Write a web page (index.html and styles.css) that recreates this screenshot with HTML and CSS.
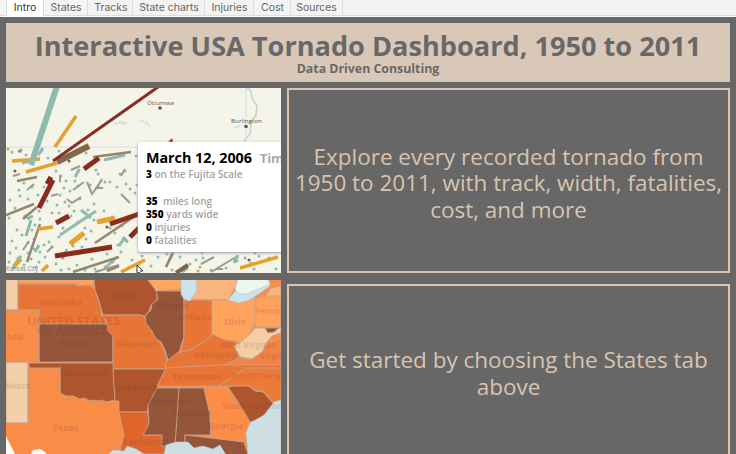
FILE: index.html
```html
<!DOCTYPE html>
<html lang="en">
<head>
<meta charset="utf-8">
<title>Interactive USA Tornado Dashboard</title>
<link rel="stylesheet" href="styles.css">
</head>
<body>
<nav class="tabs">
  <a class="tab active">Intro</a><a class="tab states">States</a><a class="tab tracks-tab">Tracks</a><a class="tab charts">State charts</a><a class="tab injuries">Injuries</a><a class="tab cost">Cost</a><a class="tab sources">Sources</a>
</nav>
<main class="dashboard">
  <header class="banner">
    <h1>Interactive USA Tornado Dashboard, 1950 to 2011</h1>
    <p>Data Driven Consulting</p>
  </header>
  <div class="grid">
    <section class="map">
      <svg viewBox="6 88 275 185" width="275" height="185">
        <rect x="6" y="88" width="275" height="185" fill="#f4f4e9"/>
        <path d="M6 147H139M246 88V142" stroke="#d2d7d4" fill="none" stroke-width=".8"/>
        <path d="M247 88l4 3 1 7 5 8-1 9-5 7-1 12-6 7" stroke="#c3d3d5" fill="none" stroke-width="1.6"/>
        <path d="M115 125l5-3 4 2 4-1M123 121v4M234 128l6-2" stroke="#dce1d9" fill="none" stroke-width="2"/>
        <path d="M139 122l4-1 5 4M146 121l4 6" stroke="#e6e5d0" fill="none" stroke-width="2"/>
        <g fill="none" class="dots">
          <path stroke="#8fbbae" d="M12 152h0M26 155h0M42 149h0M48 158h0M59 151h0M86 153h0M96 170h0M98 174h0M79 170h0M136 156h0M125 171h0M120 174h0M61 176h0M66 181h0M56 171h0M19 190h0M24 183h0M32 187h0M44 187h0M50 182h0M64 188h0M60 195h0M70 191h0M75 181h0M78 186h0M90 185h0M98 186h0M110 182h0M126 184h0M137 185h0M130 189h0M10 200h0M15 208h0M20 196h0M28 199h0M38 195h0M47 201h0M57 205h0M65 202h0M80 199h0M94 204h0M88 210h0M74 211h0M59 213h0M65 217h0M40 219h0M35 225h0M25 216h0M17 230h0M22 235h0M12 241h0M10 253h0M16 248h0M18 258h0M24 265h0M31 259h0M36 267h0M40 252h0M44 245h0M49 242h0M59 237h0M63 228h0M71 216h0M78 222h0M85 228h0M94 220h0M104 211h0M113 219h0M122 226h0M126 240h0M131 236h0M118 245h0M107 254h0M92 259h0M82 247h0M76 252h0M63 258h0M56 264h0M69 269h0M77 265h0M85 270h0M95 269h0M105 267h0M113 262h0M121 252h0M132 260h0M142 256h0M151 266h0M158 257h0M167 254h0M172 270h0M180 257h0M190 264h0M196 260h0M203 258h0M211 270h0M226 268h0M237 261h0M245 258h0M254 269h0M259 256h0M269 258h0M276 269h0"/>
          <path stroke="#8fbbae" d="M9 218h0M28 243h0M34 239h0M39 211h0M32 230h0M52 213h0M69 206h0M105 182h0M117 187h0M135 193h0M127 217h0M136 216h0M9 262h0M14 268h0M28 253h0M34 249h0M45 257h0M39 262h0M52 247h0M47 267h0M61 270h0M73 246h0M86 239h0M91 231h0M110 228h0M115 233h0M128 268h0M140 269h0M202 253h0M200 267h0M255 253h0M251 263h0"/>
          <path stroke="#8a5344" d="M69 161h0M107 227h0M249 260h0M15 171h0M20 151h0"/>
          <path stroke="#e4a12d" d="M198 271h0M8 149h0M139 264h0"/>
        </g>
        <g fill="none">
          <path stroke="#9b9c8e" stroke-width="2" d="M27 190l7-6M51 196l7-2M67 199l5 4 9-6M73 190l11-8M87 182l5 12 10-14M95 188h8M121 194l9 9M71 170l9-4M13 176l7-2M18 152l4-3M60 182v-7M99 184l3-5M121 176l4-7M23 250l6-9M47 252l6-6M62 259l5-10M95 272l24-7M211 272l25-15M201 264l13-7M217 269h6M166 267l7-13"/>
          <path stroke="#8fb9af" stroke-width="3" d="M22 163l10-3M38 155l5-6M75 177l4-7M104 160l21-5M26 236l5-16M27 219l6-3M35 252l4-7M13 267l8-11M105 268l12-11M119 246l6-9M122 238l6 4M182 272l6-4M234 263l4-8"/>
          <path stroke="#96866c" stroke-width="2.5" d="M6 215l28-11M23 219l14-12M27 262l13-38M93 157l38-5M166 267l7-15M95 243l43-29M73 272l46-15M17 181l20-4M107 271l12-5"/>
          <path stroke="#e4a12d" stroke-width="3.5" d="M55 147l21-31M12 161l28-2M26 172l31-9M38 229l15-2M15 266l6-7M42 271l6-6M121 272l24-12M240 268l38-11"/>
          <path stroke="#e4a12d" stroke-width="5" d="M70 244l14-11M97 222l18-4"/>
          <path stroke="#8a2c1b" stroke-width="5" d="M53 180l-14 28M55 256l57-9M84 169l15-11M110 224l29-10M56 223l13-7M130 237l9-9M47 184l4-7"/>
          <path stroke="#82684a" stroke-width="6" d="M57 162l32-16"/>
          <path stroke="#846142" stroke-width="4" d="M176 273l12-8"/>
          <path stroke="#8fbbae" stroke-width="6" d="M31 165L57 86"/>
          <path stroke="#93b9b1" stroke-width="3" d="M60 235L96 211M81 210l10 8"/>
          <path stroke="#8a2c20" stroke-width="3" d="M53 161L158 87"/>
          <path stroke="#a83832" stroke-width="4" d="M170 140l2 2"/>
        </g>
        <g class="place">
          <text x="147" y="105" textLength="27" lengthAdjust="spacingAndGlyphs">Ottumwa</text>
          <text x="231" y="123" textLength="31" lengthAdjust="spacingAndGlyphs">Burlington</text>
          <text x="6" y="271" textLength="32" lengthAdjust="spacingAndGlyphs" class="city">Kansas City</text>
        </g>
        <circle cx="160" cy="108" r="1.8" fill="#555"/><circle cx="246" cy="126.500" r="1.8" fill="#555"/>
      </svg>
      <div class="tooltip">
        <h2>March 12, 2006 <span>Time</span></h2>
        <p><b>3</b> on the Fujita Scale</p>
        <p class="gap"><b>35</b>&nbsp; miles long</p>
        <p><b>350</b> yards wide</p>
        <p><b>0</b> injuries</p>
        <p><b>0</b> fatalities</p>
      </div>
      <svg class="cursor" viewBox="0 0 8 10" width="8" height="10"><path d="M1 0V9L3 7L5 10M1 0L7 6H4" fill="#fff" stroke="#333"/></svg>
    </section>
    <section class="message"><p>Explore every recorded tornado from 1950 to 2011, with track, width, fatalities, cost, and more</p></section>
    <section class="map">
      <svg viewBox="6 280 275 185" width="275" height="185">
        <rect x="6" y="280" width="275" height="185" fill="#f98c46"/>
        <g stroke="#c4a18a" stroke-width=".9" stroke-linejoin="round">
          <path fill="#f3d0a9" d="M6 279H18V310H6ZM6 362H28V423H6Z"/>
          <path fill="#ffa160" d="M18 279H95L91 286 80 285 74 283H18Z"/>
          <path fill="#e87536" d="M18 284H74L79 286 84 285 91 286 95 290 100 305 102 316 108 324H39V310H18Z"/>
          <path fill="#af552d" d="M94 279H151L157 292 157 300 151 305 149 311 145 316 140 315H103L99 301 95 290Z"/>
          <path fill="#94553b" d="M39 324H107L109 330 113 336V362H39Z"/>
          <path fill="#e87536" d="M102 315H141L146 318 149 326 156 338 161 344 167 358 166 369H113V336L107 330 108 324Z"/>
          <path fill="#ffa65f" d="M147 279H181V289L156 291 151 284Z"/>
          <path fill="#fab57f" d="M188 279H240L228 300H184V290Z"/>
          <path fill="#94553b" d="M156 291H182L184 300V337L180 349 176 359 168 360 165 350 161 342 156 339 152 331 146 323 145 316 151 310 152 304 158 299Z"/>
          <path fill="#e87536" d="M184 300H212V334L207 341 200 344 190 350 181 352 184 337Z"/>
          <path fill="#ffa35c" d="M212 300H228L244 302 255 293V323L250 334 242 344 235 341 227 342 212 336Z"/>
          <path fill="#fab57f" d="M263 300L271 288 281 286V297L273 298V302"/>
          <path fill="#ffa35c" d="M255 299L264 296 281 296V327H255Z"/>
          <path fill="#e87536" d="M166 362L177 353 190 350 200 344 207 340 212 334 225 340 235 341 239 356 250 360 281 346V384H163Z"/>
          <path fill="#f38344" d="M239 358L250 360 262 347 281 338V367H220Z"/>
          <path fill="#f4cfa5" d="M255 328H281V333L272 336 267 342 262 352 252 359 240 357 234 346 242 341 251 333Z"/>
          <path fill="#94553b" d="M265 328H279L274 332 268 333Z"/>
          <path fill="#af552d" d="M29 363H113L114 380 115 400 106 402 103 400 98 401 94 400 90 401 84 398 80 399 73 396 66 396 60 393V368H29Z"/>
          <path fill="#af552d" d="M113 369H166L162 377 157 389 149 404 147 412H119V401H115Z"/>
          <path fill="#de662d" d="M119 412H148L149 424 144 435H163L168 454H119L124 435Z"/>
          <path fill="#94553b" d="M157 388H179L176 443 162 447V435H143L149 424 148 405Z"/>
          <path fill="#94553b" d="M179 388H204L210 414 211 435H185V446H175Z"/>
          <path fill="#e87536" d="M166 368L218 365H281V387L270 388 245 386 228 386H157Z"/>
          <path fill="#fd8c47" d="M204 388L228 387 237 402 250 419 244 442 211 438 210 414Z"/>
          <path fill="#af552d" d="M228 387L238 385 249 386 255 391 263 392 275 405 265 418 250 422 238 402Z"/>
          <path fill="#ee7a38" d="M245 368H281V403H274L263 391 255 390 249 386H218L231 378Z"/>
          <path fill="#94553b" d="M185 435L211 438 244 442 248 455H185Z"/>
          <path fill="none" d="M6 310H39V362H6M28 363V423H6M60 367V394"/>
        </g>
        <g stroke="#a9c7cb" stroke-width=".6">
          <path fill="#cce4e9" d="M181 279H196L197 290 190 301 184 299 181 294ZM228 300L236 290 240 279H268L270 286 260 293 249 300 239 303Z"/>
          <path fill="#edf5ef" d="M238 279H268L270 284 259 289 246 294 239 294 235 289Z"/>
          <path fill="#cddfe2" d="M281 400L274 402 264 415 250 423 246 433 248 455H281ZM164 454L166 445 176 442 188 442 194 448 203 446 213 449 220 445 226 455H281V465H164ZM109 454L113 450 124 451 127 446 136 449 144 454V465H109Z"/>
          <path fill="#fbfdf8" stroke="none" d="M6 436L11 446 15 454V465H6ZM31 454L33 450 40 449 45 452 47 455V465H31Z"/>
        </g>
        <g class="labels">
          <text x="39" y="306" textLength="43" lengthAdjust="spacingAndGlyphs">Nebraska</text><text x="123" y="298" textLength="22" text-anchor="middle" lengthAdjust="spacingAndGlyphs">Iowa</text>
          <text x="27" y="324.500" textLength="93" lengthAdjust="spacingAndGlyphs" class="country">UNITED STATES</text><text x="37" y="335" textLength="73" lengthAdjust="spacingAndGlyphs" class="country">OF AMERICA</text>
          <text x="59" y="346" textLength="32" lengthAdjust="spacingAndGlyphs">Kansas</text><text x="116" y="347" textLength="40" lengthAdjust="spacingAndGlyphs">Missouri</text>
          <text x="157" y="309" textLength="32" lengthAdjust="spacingAndGlyphs">Illinois</text><text x="178" y="320" textLength="34" lengthAdjust="spacingAndGlyphs">Indiana</text><text x="224" y="325" textLength="22" lengthAdjust="spacingAndGlyphs">Ohio</text>
          <text x="6" y="340" textLength="17" lengthAdjust="spacingAndGlyphs">ado</text><text x="60" y="376" textLength="47" lengthAdjust="spacingAndGlyphs">Oklahoma</text><text x="53" y="431" textLength="25" lengthAdjust="spacingAndGlyphs">Texas</text>
          <text x="117" y="391" textLength="40" lengthAdjust="spacingAndGlyphs">Arkansas</text><text x="194" y="358" textLength="43" lengthAdjust="spacingAndGlyphs">Kentucky</text><text x="172" y="380" textLength="50" lengthAdjust="spacingAndGlyphs">Tennessee</text>
          <text x="232" y="379" textLength="62" lengthAdjust="spacingAndGlyphs">North Carolina</text><text x="222" y="409" textLength="59" lengthAdjust="spacingAndGlyphs">South Carolina</text><text x="209" y="429" textLength="34" lengthAdjust="spacingAndGlyphs">Georgia</text>
          <text x="173" y="416" textLength="38" lengthAdjust="spacingAndGlyphs">Alabama</text><text x="146" y="404" textLength="43" lengthAdjust="spacingAndGlyphs">Mississippi</text><text x="124" y="445" textLength="40" lengthAdjust="spacingAndGlyphs">Louisiana</text>
          <text x="255" y="314" textLength="54" lengthAdjust="spacingAndGlyphs">Pennsylvania</text><text x="220" y="348" textLength="56" lengthAdjust="spacingAndGlyphs">West Virginia</text><text x="260" y="359" textLength="32" lengthAdjust="spacingAndGlyphs">Virginia</text><text x="6" y="389" textLength="24" lengthAdjust="spacingAndGlyphs">Mexico</text>
        </g>
      </svg>
    </section>
    <section class="message second"><p>Get started by choosing the States tab above</p></section>
  </div>
</main>
</body>
</html>
```
FILE: styles.css
```css
* { box-sizing: border-box; }
body { margin: 0; height: 454px; overflow: hidden; background: #676767; font-family: "Open Sans", sans-serif; }
h1, h2, p { margin: 0; }
.tabs { display: flex; height: 17px; padding-left: 6px; background: #f4f4f4; border-bottom: 1px solid #fff; box-shadow: inset 0 -1px #dedede; }
.tab { width: 45px; height: 15px; border-right: 1px solid #dcdcdc; text-align: center; font: 10.500px/15px Inter, sans-serif; color: #666; white-space: nowrap; }
.tab.active { width: 38px; height: 16px; background: #fff; border-left: 1px solid #dcdcdc; color: #333; }
.tab.states { width: 44px; padding-left: 1px; }
.tab.tracks-tab { padding-left: 2px; }
.tab.charts { width: 72px; padding-left: 1px; }
.tab.injuries { width: 49px; padding-left: 1px; }
.tab.cost { width: 37px; padding-left: 1px; }
.tab.sources { width: 52px; }
.dashboard { padding: 6px; }
.banner { height: 59px; background: #d9c8b7; color: #686868; text-align: center; padding-top: 5px; }
.banner h1 { font-size: 27.150px; line-height: 36px; font-weight: 700; white-space: nowrap; }
.banner p { font-size: 12.350px; line-height: 10px; font-weight: 700; }
.grid { display: grid; grid-template-columns: 275px 443px; grid-template-rows: 185px 185px; gap: 7px 6px; padding-top: 6px; }
.map { position: relative; overflow: hidden; }
.map svg { display: block; }
.dots { stroke-width: 3; stroke-linecap: round; }
.place { font: 6px "Open Sans", sans-serif; fill: #555; }
.place .city { font-size: 8px; opacity: .7; }
.labels { font: 700 8px "Open Sans", sans-serif; fill: #633; opacity: .16; }
.labels .country { font-size: 10px; }
.tooltip { position: absolute; left: 132px; top: 54px; width: 160px; height: 110px; padding: 6px 8px; background: #fff; border-radius: 3px; box-shadow: 0 1px 3px #999; color: #a3a3a3; white-space: nowrap; font-weight: 600; }
.tooltip h2 { font-size: 14.300px; line-height: 19px; color: #000; font-weight: 700; }
.tooltip span { margin-left: 4px; font-size: 13px; color: #aaa; }
.tooltip p { font-size: 10px; line-height: 13px; }
.tooltip b { color: #000; }
.tooltip .gap { margin-top: 14px; }
.map .cursor { position: absolute; left: 130px; top: 177px; }
.message { display: flex; align-items: center; justify-content: center; padding: 11px 5px 5px; border: 2px solid #d9c4b1; color: #d9c4b1; text-align: center; font-size: 22.480px; line-height: 26.500px; }
.message.second { margin-top: 4px; padding: 0 5px 2px; }
```
